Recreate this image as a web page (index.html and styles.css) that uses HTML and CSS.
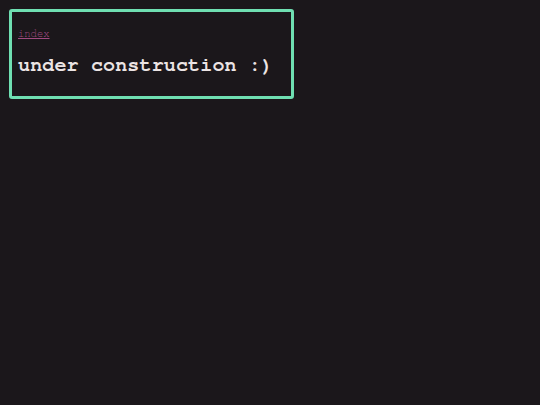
FILE: index.html
```html
<!DOCTYPE html>
<html>
<head>
<meta charset="utf-8">
<link rel="stylesheet" href="styles.css">
</head>
<body>
<div class="box">
  <a class="link" href="#">index</a>
  <h1 class="title">under construction :)</h1>
</div>
</body>
</html>
```

FILE: styles.css
```css
html, body {
  margin: 0;
  padding: 0;
  background: #1b171b;
  height: 100%;
}
body {
  font-family: "Nimbus Mono PS", "Nimbus Mono L", "FreeMono", "Courier", monospace;
  color: #ece4e4;
}
.box {
  margin: 9px;
  box-sizing: border-box;
  width: 285px;
  border: 3px solid #6fdfb2;
  border-radius: 3px;
  padding: 16px 6px 19px 6px;
}
.link {
  display: block;
  font-size: 10.5px;
  line-height: 12px;
  color: #a04a80;
  text-decoration: underline;
}
.title {
  margin: 13px 0 0 0;
  font-size: 20px;
  line-height: 24px;
  letter-spacing: 0.15px;
  font-weight: bold;
}
```
